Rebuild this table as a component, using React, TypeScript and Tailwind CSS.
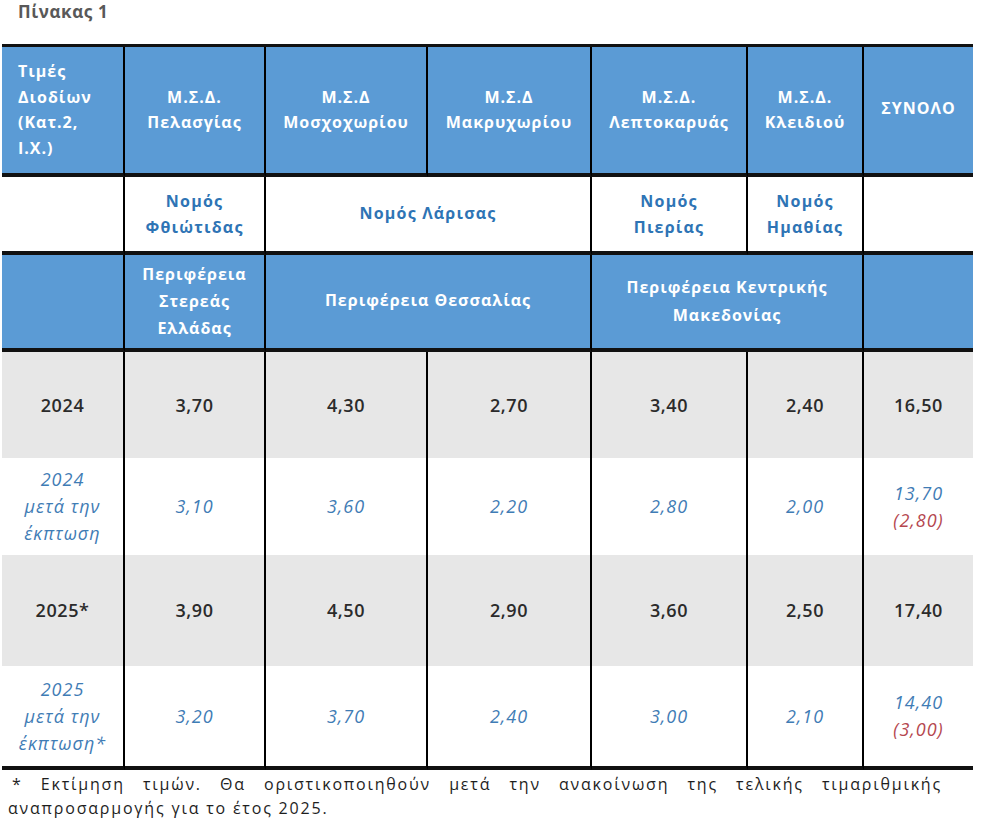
import { clsx } from 'clsx';
import type { ReactNode } from 'react';

const COLS = 'grid-cols-[123px_141px_162px_164px_156px_116px_109px]';

function Cell({ children, className }: { children?: ReactNode; className?: string }) {
  return (
    <div className={clsx('flex items-center justify-center text-center', className)}>
      {children}
    </div>
  );
}

const head = 'bg-[#5b9bd5] text-white font-bold text-[16px] leading-[25.5px] tracking-[1px]';
const county = 'bg-white text-[#2e74b5] font-bold text-[16px] leading-[26px] tracking-[1.2px]';
const vr = 'border-r-2 border-r-black';
const thick = 'border-b-4 border-b-[#111]';

const rows = [
  { label: '2024', values: ['3,70', '4,30', '2,70', '3,40', '2,40'], total: '16,50', note: '' },
  { label: '2024\nμετά την\nέκπτωση', values: ['3,10', '3,60', '2,20', '2,80', '2,00'], total: '13,70', note: '(2,80)' },
  { label: '2025*', values: ['3,90', '4,50', '2,90', '3,60', '2,50'], total: '17,40', note: '' },
  { label: '2025\nμετά την\nέκπτωση*', values: ['3,20', '3,70', '2,40', '3,00', '2,10'], total: '14,40', note: '(3,00)' },
];

const rowHeights = ['h-[106px]', 'h-[97px]', 'h-[111px]', 'h-[104px]'];

export default function App() {
  return (
    <div className="w-[1000px] h-[833px] bg-white font-['Open_Sans',sans-serif]">
      <div className="pt-[2px] pl-[18px] text-[17px] leading-[20px] font-bold tracking-[0.6px] text-[#595959]">Πίνακας 1</div>

      <div className={clsx('grid ml-[2px] mt-[22px] w-[971px] border-t-[3px] border-t-[#111]', COLS)}>
        {/* header row */}
        <Cell className={clsx(head, vr, thick, 'h-[130px] justify-start text-left pl-[16px] tracking-[0.6px]')}>
          <span>Τιμές<br />Διοδίων<br />(Κατ.2,<br />Ι.Χ.)</span>
        </Cell>
        <Cell className={clsx(head, vr, thick)}><span>Μ.Σ.Δ.<br />Πελασγίας</span></Cell>
        <Cell className={clsx(head, vr, thick)}><span>Μ.Σ.Δ<br />Μοσχοχωρίου</span></Cell>
        <Cell className={clsx(head, vr, thick)}><span>Μ.Σ.Δ<br />Μακρυχωρίου</span></Cell>
        <Cell className={clsx(head, vr, thick)}><span>Μ.Σ.Δ.<br />Λεπτοκαρυάς</span></Cell>
        <Cell className={clsx(head, vr, thick)}><span>Μ.Σ.Δ.<br />Κλειδιού</span></Cell>
        <Cell className={clsx(head, thick, 'pb-[2px]')}><span>ΣΥΝΟΛΟ</span></Cell>

        {/* counties */}
        <Cell className={clsx(county, vr, thick, 'h-[78px]')} />
        <Cell className={clsx(county, vr, thick)}><span>Νομός<br />Φθιώτιδας</span></Cell>
        <Cell className={clsx(county, vr, thick, 'col-span-2 pb-[2px]')}><span>Νομός Λάρισας</span></Cell>
        <Cell className={clsx(county, vr, thick)}><span>Νομός<br />Πιερίας</span></Cell>
        <Cell className={clsx(county, vr, thick)}><span>Νομός<br />Ημαθίας</span></Cell>
        <Cell className={clsx(county, thick)} />

        {/* regions */}
        <Cell className={clsx(head, vr, thick, 'h-[97px] leading-[27px]')} />
        <Cell className={clsx(head, vr, thick, 'leading-[27px]')}><span>Περιφέρεια<br />Στερεάς<br />Ελλάδας</span></Cell>
        <Cell className={clsx(head, vr, thick, 'col-span-2 pb-[2px] tracking-[1.4px]')}><span>Περιφέρεια Θεσσαλίας</span></Cell>
        <Cell className={clsx(head, vr, thick, 'col-span-2 leading-[28px] pb-[2px]')}><span>Περιφέρεια Κεντρικής<br />Μακεδονίας</span></Cell>
        <Cell className={clsx(head, thick)} />

        {/* data */}
        {rows.map((r, i) => {
          const discount = r.note !== '';
          const last = i === rows.length - 1;
          const base = clsx(
            discount
              ? 'bg-white italic font-normal text-[#3f7cb5] text-[18px] tracking-[1px]'
              : 'bg-[#e7e7e7] font-semibold text-[#2b2b2b] text-[18px] tracking-[0.6px]',
            'leading-[27px]',
            last && thick,
          );
          return [
            <Cell key={`l${i}`} className={clsx(base, vr, rowHeights[i], 'whitespace-pre-line')}>
              <span>{r.label}</span>
            </Cell>,
            ...r.values.map((v, j) => (
              <Cell key={`v${i}-${j}`} className={clsx(base, vr)}>
                <span>{v}</span>
              </Cell>
            )),
            <Cell key={`t${i}`} className={base}>
              <span>
                {r.total}
                {discount && (
                  <>
                    <br />
                    <span className="text-[#b5474f]">{r.note}</span>
                  </>
                )}
              </span>
            </Cell>,
          ];
        })}
      </div>

      <div className="w-[942px] pl-[8px] mt-[2px] text-[16px] leading-[24px] tracking-[1.8px] text-[#1e1e1e]">
        <div className="pl-[4px] text-justify [text-align-last:justify]">
          * Εκτίμηση τιμών. Θα οριστικοποιηθούν μετά την ανακοίνωση της τελικής τιμαριθμικής
        </div>
        <div>αναπροσαρμογής για το έτος 2025.</div>
      </div>
    </div>
  );
}
